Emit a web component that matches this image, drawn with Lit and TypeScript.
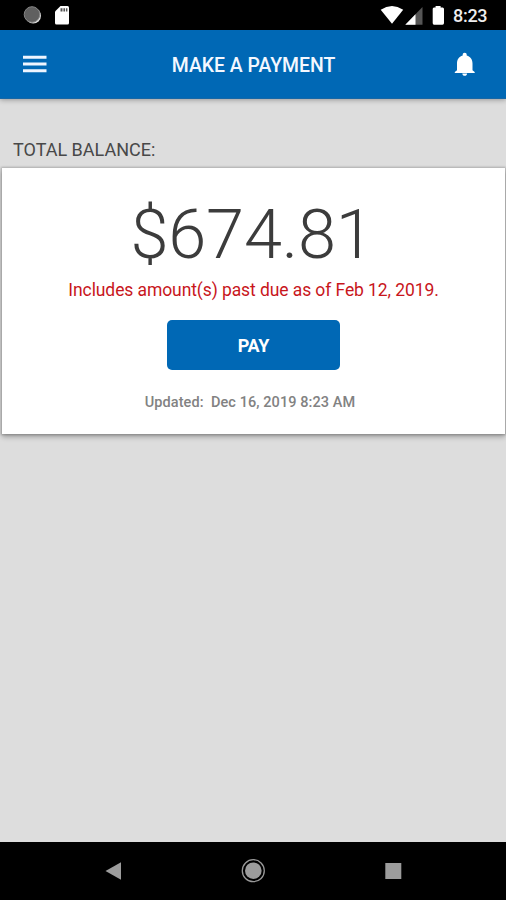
import { LitElement, html, css } from "lit";
import { customElement } from "lit/decorators.js";

@customElement("status-bar")
class StatusBar extends LitElement {
  static styles = css`
    :host { display: flex; height: 30px; background: #000; color: #eee; }
    svg { flex: 1; height: 30px; display: block; }
    .time { width: 53px; font-size: 18px; line-height: 32px; font-weight: 500; letter-spacing: -0.3px; }
  `;
  render() {
    return html`
      <svg viewBox="0 0 453 30">
        <circle cx="33.2" cy="15.8" r="7.8" fill="#ddd" />
        <circle cx="32" cy="14.5" r="7.8" fill="#606060" stroke="#858585" stroke-width="1" />
        <path d="M60.5 6H67.500Q69 6 69 7.500V23Q69 24.500 67.500 24.500H56.500Q55 24.500 55 23V11.500Z" fill="#fff" />
        <path d="M60.500 8.300h2v3.200h-2zM63.400 8.300h1.600v3.200h-1.600zM65.900 8.300h1.500v3.200h-1.500z" fill="#555" />
        <path d="M380.700 9.700Q392 2.300 403.200 9.700L392 23.700Z" fill="#fff" />
        <path d="M422.500 7V24.800H405.300Z" fill="#555" />
        <path d="M415.500 14.200V24.800H405.300Z" fill="#fff" />
        <path d="M435.600 6h5v1.500h2Q444 7.500 444 9V23Q444 24.800 442.500 24.800H434Q432.700 24.800 432.700 23V9Q432.700 7.500 434 7.500h1.600Z" fill="#fff" />
      </svg>
      <span class="time">8:23</span>
    `;
  }
}

@customElement("app-header")
class AppHeader extends LitElement {
  static styles = css`
    :host {
      display: grid; grid-template-columns: 80px 1fr 80px; align-items: center; height: 69px;
      box-sizing: border-box; background: #0068b5; color: #f4f8ff; position: relative;
      border-bottom: 1px solid #1767a5; box-shadow: 0 1px 5px rgba(0, 0, 0, 0.32);
    }
    svg { display: block; width: 80px; height: 68px; }
    .title { text-align: center; font-size: 19.4px; line-height: 24px; font-weight: 500; padding: 4px 0 0 1px; white-space: nowrap; }
  `;
  render() {
    return html`
      <svg viewBox="0 0 80 68" fill="#eef5ff">
        <path d="M23 25.700h23.500v3H23zM23 32.500h23.500v3H23zM23 39.300h23.500v3H23z" />
      </svg>
      <div class="title">MAKE A PAYMENT</div>
      <svg viewBox="0 0 80 68" fill="#fff">
        <path d="M38.700 22.700c-1.300 0-2 .9-2 2v.8c-3.900 1-5.700 4.200-5.700 8v6.700l-2.200 1.900v.9h19.900v-.9l-2.200-1.900v-6.700c0-3.800-1.900-7-5.800-8v-.8c0-1.100-.7-2-2-2zM36.300 43.500c.1 1.400 1.100 2.300 2.400 2.300s2.400-.9 2.400-2.300z" />
      </svg>
    `;
  }
}

@customElement("balance-card")
class BalanceCard extends LitElement {
  static styles = css`
    :host {
      display: flex; flex-direction: column; align-items: center; box-sizing: border-box;
      height: 266px; margin: 0 1px 0 2px; padding-top: 27px; background: #fff;
      box-shadow: 0 0 2px 1px rgba(0, 0, 0, 0.2), 0 3px 5px rgba(0, 0, 0, 0.28);
    }
    .amount { font-size: 68.500px; line-height: 80px; font-weight: 300; color: #3c3c3c; margin-right: 3px; letter-spacing: -0.2px; }
    .notice { margin-top: 4px; font-size: 17.500px; line-height: 22px; letter-spacing: -0.09px; color: #c8161c; white-space: nowrap; }
    .pay {
      margin-top: 19px; width: 173px; height: 50px; border: 0; border-radius: 5px; padding: 1px 0 0;
      background: #0068b5; color: #fff; font: 700 18px/22px Roboto, sans-serif; letter-spacing: -0.2px;
    }
    .updated { margin-top: 24px; margin-right: 7px; font-size: 14.500px; line-height: 18px; font-weight: 500; letter-spacing: 0.08px; color: #828282; white-space: pre; }
  `;
  render() {
    return html`
      <div class="amount">$674.81</div>
      <div class="notice">Includes amount(s) past due as of Feb 12, 2019.</div>
      <button class="pay">PAY</button>
      <div class="updated">Updated:  Dec 16, 2019 8:23 AM</div>
    `;
  }
}

@customElement("nav-bar")
class NavBar extends LitElement {
  static styles = css`
    :host { display: block; height: 58px; background: #000; }
    svg { display: block; width: 506px; height: 58px; }
  `;
  render() {
    return html`
      <svg viewBox="0 0 506 58">
        <path d="M105.500 29L121 20.300V37.700Z" fill="#9c9c9c" />
        <circle cx="253.300" cy="28.700" r="11" fill="none" stroke="#999" stroke-width="1.300" />
        <circle cx="253.300" cy="28.700" r="8.300" fill="#9c9c9c" />
        <rect x="385.300" y="21" width="16" height="16" fill="#9c9c9c" />
      </svg>
    `;
  }
}

@customElement("app-root")
class AppRoot extends LitElement {
  static styles = css`
    :host { display: flex; flex-direction: column; height: 900px; background: #ddd; font-family: Roboto, sans-serif; overflow: hidden; }
    .content { flex: 1; padding-top: 40px; }
    .label { padding-left: 13px; height: 29px; font-size: 18px; line-height: 22px; color: #484848; }
  `;
  render() {
    return html`
      <status-bar></status-bar>
      <app-header></app-header>
      <main class="content">
        <div class="label">TOTAL BALANCE:</div>
        <balance-card></balance-card>
      </main>
      <nav-bar></nav-bar>
    `;
  }
}
